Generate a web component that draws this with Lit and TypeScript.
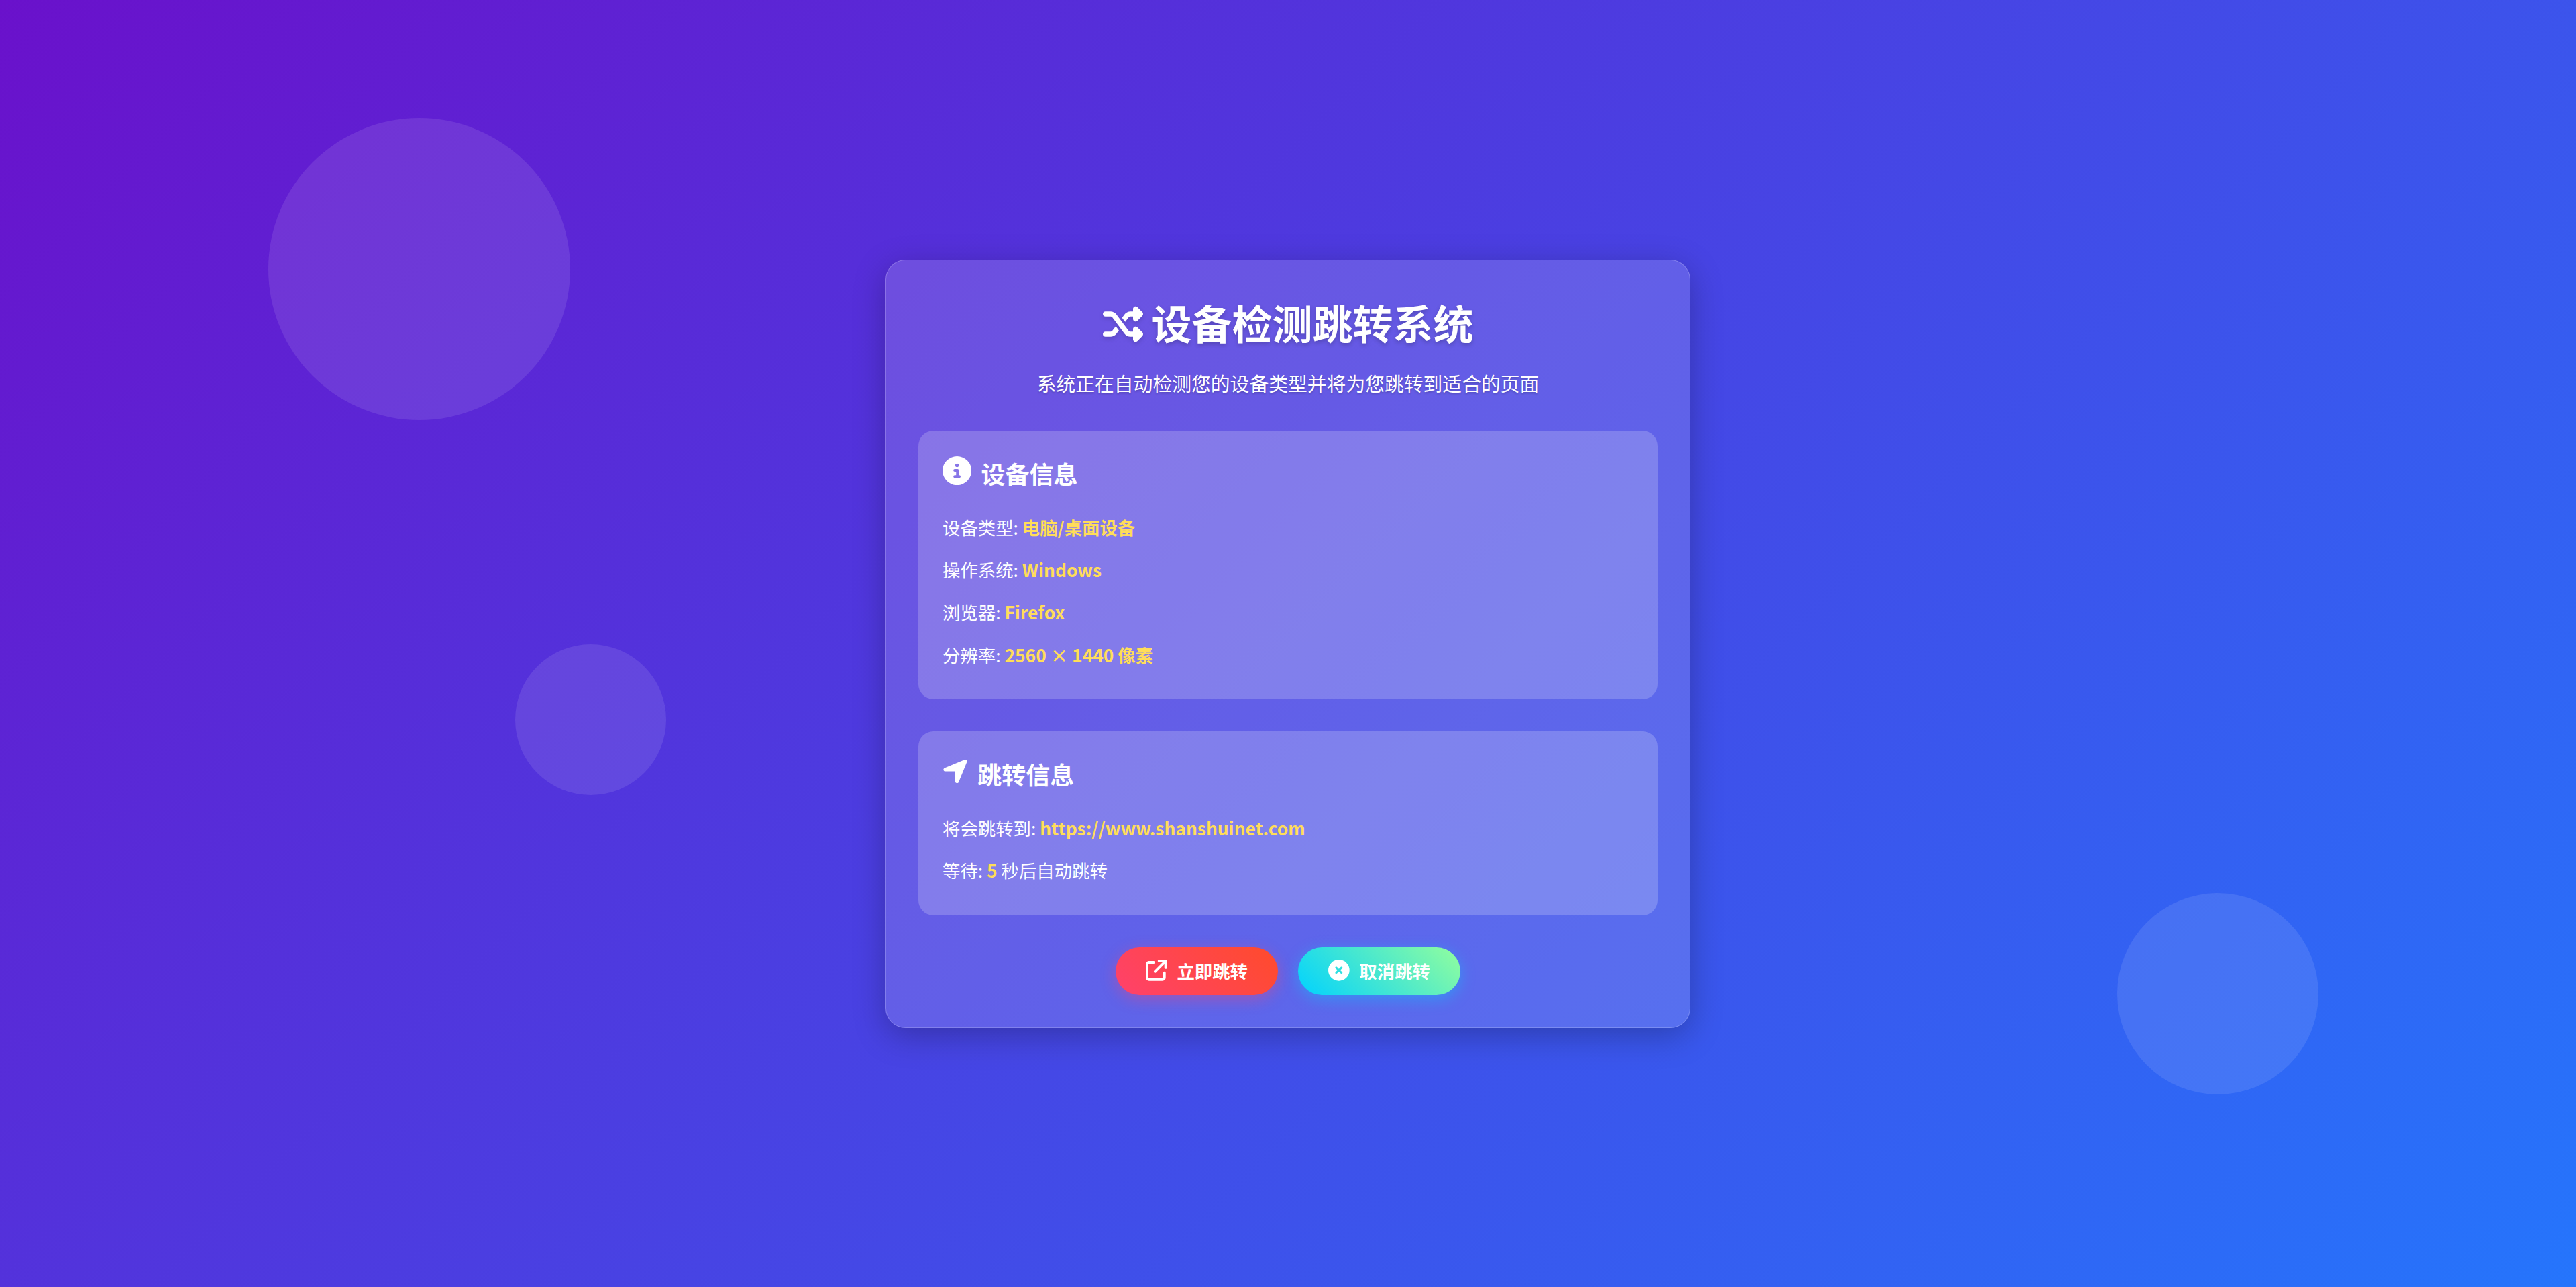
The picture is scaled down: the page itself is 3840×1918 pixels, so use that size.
import { LitElement, html, css, svg } from "lit";
import { customElement } from "lit/decorators.js";

const ICONS = {
  shuffle: { w: 512, d: "M403.8 34.4c12-5 25.7-2.2 34.9 6.9l64 64c6 6 9.4 14.1 9.4 22.6s-3.4 16.6-9.4 22.6l-64 64c-9.2 9.2-22.9 11.9-34.9 6.9s-19.8-16.6-19.8-29.6V160H352c-10.1 0-19.6 4.7-25.6 12.8L284 229.3 244 176l31.2-41.6C293.3 110.2 321.8 96 352 96h32V64c0-12.9 7.8-24.6 19.8-29.6zM164 282.7L204 336l-31.2 41.6C154.7 401.8 126.2 416 96 416H32c-17.7 0-32-14.3-32-32s14.3-32 32-32H96c10.1 0 19.6-4.7 25.6-12.8L164 282.7zm274.6 188c-9.2 9.2-22.9 11.9-34.9 6.9s-19.8-16.6-19.8-29.6V416H352c-30.2 0-58.7-14.2-76.8-38.4L121.6 172.8c-6-8.1-15.5-12.8-25.6-12.8H32c-17.7 0-32-14.3-32-32s14.3-32 32-32H96c30.2 0 58.7 14.2 76.8 38.4L326.4 339.2c6 8.1 15.5 12.8 25.6 12.8h32V320c0-12.9 7.8-24.6 19.8-29.6s25.7-2.2 34.9 6.9l64 64c6 6 9.4 14.1 9.4 22.6s-3.4 16.6-9.4 22.6l-64 64z" },
  info: { w: 512, d: "M256 512A256 256 0 1 0 256 0a256 256 0 1 0 0 512zM216 336h24V272H216c-13.3 0-24-10.7-24-24s10.7-24 24-24h48c13.3 0 24 10.7 24 24v88h8c13.3 0 24 10.7 24 24s-10.7 24-24 24H216c-13.3 0-24-10.7-24-24s10.7-24 24-24zm40-208a32 32 0 1 1 0 64 32 32 0 1 1 0-64z" },
  arrow: { w: 448, d: "M429.6 92.1c4.9-11.9 2.1-25.6-7-34.7s-22.8-11.9-34.7-7l-352 144c-14.2 5.8-22.2 20.8-19.3 35.8s16.1 25.8 31.4 25.8H224V432c0 15.3 10.8 28.4 25.8 31.4s30-5.1 35.8-19.3l144-352z" },
  external: { w: 512, d: "M320 0c-17.7 0-32 14.3-32 32s14.3 32 32 32h82.7L201.4 265.4c-12.5 12.5-12.5 32.8 0 45.3s32.8 12.5 45.3 0L448 109.3V192c0 17.7 14.3 32 32 32s32-14.3 32-32V32c0-17.7-14.3-32-32-32H320zM80 32C35.8 32 0 67.8 0 112V432c0 44.2 35.8 80 80 80H400c44.2 0 80-35.8 80-80V320c0-17.7-14.3-32-32-32s-32 14.3-32 32V432c0 8.8-7.2 16-16 16H80c-8.8 0-16-7.2-16-16V112c0-8.8 7.2-16 16-16H192c17.7 0 32-14.3 32-32s-14.3-32-32-32H80z" },
  xmark: { w: 512, d: "M256 512A256 256 0 1 0 256 0a256 256 0 1 0 0 512zM175 175c9.4-9.4 24.6-9.4 33.9 0l47 47 47-47c9.4-9.4 24.6-9.4 33.9 0s9.4 24.6 0 33.9l-47 47 47 47c9.4 9.4 9.4 24.6 0 33.9s-24.6 9.4-33.9 0l-47-47-47 47c-9.4 9.4-24.6 9.4-33.9 0s-9.4-24.6 0-33.9l47-47-47-47c-9.4-9.4-9.4-24.6 0-33.9z" },
};

const icon = (name: keyof typeof ICONS, cls: string) =>
  html`<svg class=${cls} viewBox="0 0 ${ICONS[name].w} 512" fill="currentColor" aria-hidden="true">${svg`<path d=${ICONS[name].d}></path>`}</svg>`;

@customElement("app-root")
export class AppRoot extends LitElement {
  static styles = css`
    :host {
      display: block;
      font-family: "Noto Sans CJK SC", "Noto Sans", sans-serif;
      color: #fff;
      line-height: 1.6;
    }
    .page {
      position: relative;
      box-sizing: border-box;
      height: 1918px;
      padding-top: 1px;
      overflow: hidden;
      display: flex;
      align-items: center;
      justify-content: center;
      background: linear-gradient(135deg, #6a11cb 0%, #2575fc 100%);
    }
    .circle {
      position: absolute;
      border-radius: 50%;
      background: rgba(255, 255, 255, 0.1);
    }
    .c1 { left: 400px; top: 176px; width: 450px; height: 450px; }
    .c2 { left: 768px; top: 960px; width: 225px; height: 225px; }
    .c3 { left: 3156px; top: 1331px; width: 300px; height: 300px; }
    .card {
      position: relative;
      box-sizing: border-box;
      width: 1200px;
      padding: 48px;
      border: 1.5px solid rgba(255, 255, 255, 0.2);
      border-radius: 30px;
      background: rgba(255, 255, 255, 0.15);
      box-shadow: 0 12px 48px rgba(0, 0, 0, 0.25);
    }
    h1 {
      margin: 0 0 23.3px;
      font-size: 60px;
      font-weight: 700;
      line-height: 88px;
      display: flex;
      align-items: center;
      justify-content: center;
      gap: 13px;
      text-shadow: 0 3px 6px rgba(0, 0, 0, 0.2);
    }
    .i-title {
      width: 60px;
      height: 60px;
      margin-top: 6px;
      filter: drop-shadow(0 3px 3px rgba(0, 0, 0, 0.15));
    }
    .sub {
      margin: 0 0 48px;
      font-size: 28.8px;
      line-height: 46.08px;
      text-align: center;
      text-shadow: 0 1.5px 3px rgba(0, 0, 0, 0.2);
    }
    .panel {
      border-radius: 22.5px;
      background: rgba(255, 255, 255, 0.2);
      padding: 36px 36px 45.2px;
      margin-bottom: 48px;
    }
    h2 {
      margin: 0 0 32.2px;
      font-size: 36px;
      font-weight: 700;
      line-height: 54.6px;
      display: flex;
      align-items: center;
    }
    .i-head {
      height: 43.2px;
      margin: -7px 14.4px 0 0;
    }
    .i-info { width: 43.2px; }
    .i-arrow { width: 37.8px; }
    .rows { display: flex; flex-direction: column; gap: 21.12px; }
    .row { font-size: 26.4px; line-height: 42.24px; }
    .row b { color: #ffdd59; font-weight: 700; }
    .actions { display: flex; justify-content: center; gap: 30px; }
    .btn {
      display: flex;
      align-items: center;
      gap: 14.7px;
      border: 0;
      border-radius: 75px;
      padding: 14.4px 45px;
      font: 700 26.4px/42.24px "Noto Sans CJK SC", "Noto Sans", sans-serif;
      color: #fff;
    }
    .i-btn { width: 31.68px; height: 31.68px; margin-top: -2px; }
    .go {
      background: linear-gradient(45deg, #ff416c, #ff4b2b);
      box-shadow: 0 6px 22px rgba(255, 65, 108, 0.4);
    }
    .stop {
      background: linear-gradient(45deg, #00d2ff, #92fe9d);
      box-shadow: 0 6px 22px rgba(0, 210, 255, 0.4);
    }
  `;

  render() {
    return html`
      <div class="page">
        <div class="circle c1"></div>
        <div class="circle c2"></div>
        <div class="circle c3"></div>
        <main class="card">
          <h1>${icon("shuffle", "i-title")}<span>设备检测跳转系统</span></h1>
          <p class="sub">系统正在自动检测您的设备类型并将为您跳转到适合的页面</p>
          <section class="panel">
            <h2>${icon("info", "i-head i-info")}设备信息</h2>
            <div class="rows">
              <div class="row">设备类型: <b>电脑/桌面设备</b></div>
              <div class="row">操作系统: <b>Windows</b></div>
              <div class="row">浏览器: <b>Firefox</b></div>
              <div class="row">分辨率: <b>2560 × 1440 像素</b></div>
            </div>
          </section>
          <section class="panel">
            <h2>${icon("arrow", "i-head i-arrow")}跳转信息</h2>
            <div class="rows">
              <div class="row">将会跳转到: <b>https://www.shanshuinet.com</b></div>
              <div class="row">等待: <b>5</b> 秒后自动跳转</div>
            </div>
          </section>
          <div class="actions">
            <button class="btn go">${icon("external", "i-btn")}立即跳转</button>
            <button class="btn stop">${icon("xmark", "i-btn")}取消跳转</button>
          </div>
        </main>
      </div>
    `;
  }
}
